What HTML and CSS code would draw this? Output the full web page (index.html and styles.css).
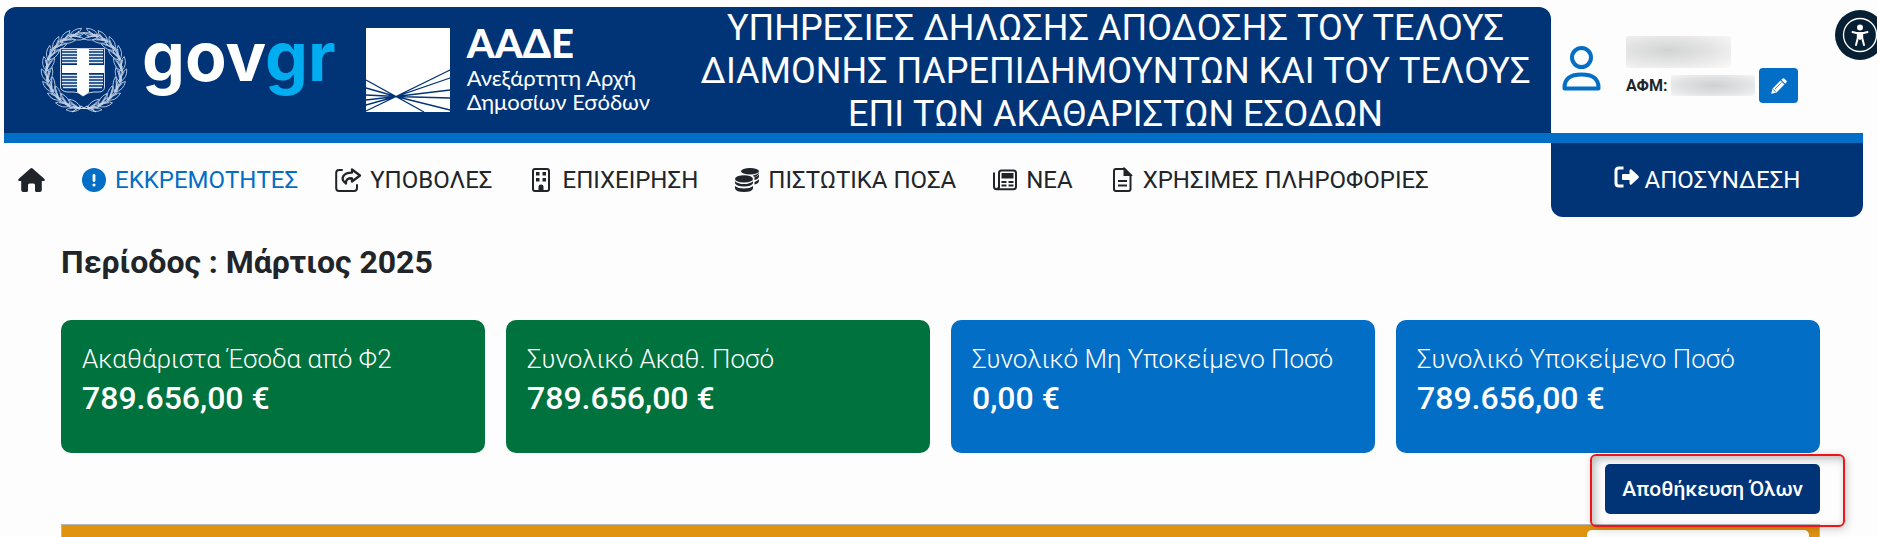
FILE: index.html
```html
<!DOCTYPE html>
<html lang="el">
<head>
<meta charset="utf-8">
<meta name="viewport" content="width=device-width, initial-scale=1">
<title>Τέλος Διαμονής Παρεπιδημούντων</title>
<link rel="stylesheet" href="styles.css">
</head>
<body>
<header class="top">
  <div class="banner">
    <svg class="emblem" viewBox="0 0 84 84" aria-hidden="true">
      <defs>
        <g id="leaf" fill="none" stroke="#c3d2e8" stroke-width="0.8">
          <path d="M5 48Q-2 43 0 34Q6 38 5 48ZM5 48Q4 40 11 34Q12 43 5 48ZM5 46Q2 39 5 32Q9 39 5 46M2 37L5 44M9 37L5 44M5 34V46"/>
        </g>
        <g id="branch">
          <use href="#leaf" transform="rotate(-76 42 42)"/>
          <use href="#leaf" transform="rotate(-59 42 42)"/>
          <use href="#leaf" transform="rotate(-42 42 42)"/>
          <use href="#leaf" transform="rotate(-25 42 42)"/>
          <use href="#leaf" transform="rotate(-8 42 42)"/>
          <use href="#leaf" transform="rotate(9 42 42)"/>
          <use href="#leaf" transform="rotate(26 42 42)"/>
          <use href="#leaf" transform="rotate(43 42 42)"/>
          <use href="#leaf" transform="rotate(60 42 42)"/>
          <use href="#leaf" transform="rotate(76 42 42)"/>
        </g>
      </defs>
      <use href="#branch"/>
      <use href="#branch" transform="matrix(-1 0 0 1 84 0)"/>
      <path d="M30 83L39 77L42 79L45 77L54 83M32 79L52 80" fill="none" stroke="#dfe8f5" stroke-width="1"/>
      <path d="M18.500 19.500H62.500V58Q62.500 62 58 63H52Q46 63 41 67Q37 63 32 63H25Q18.500 62 18.500 58Z" fill="none" stroke="#c3d2e8"/>
      <path d="M20 21.500H35M20 24.500H35M20 27.500H35M20 30.500H35M20 33.500H35M20 46.500H35M20 49.500H35M20 52.500H35M20 55.500H35M21 58.500H35M47 21.500H61M47 24.500H61M47 27.500H61M47 30.500H61M47 33.500H61M47 46.500H61M47 49.500H61M47 52.500H61M47 55.500H61M47 58.500H60" stroke="#dfe8f5" stroke-width="1.700"/>
      <path d="M35 20H47V36H62V44H47V63L41 67L35 63V44H20V36H35Z" fill="#fff"/>
    </svg>
    <span class="gov">gov<span class="gov-tail">gr</span></span>
    <div class="aade">
      <svg class="aade-mark" viewBox="0 0 84 84" aria-hidden="true">
        <path fill="#fff" d="M0 0H84V84H0Z"/>
        <path d="M0 52L30 68.500L84 42M0 60L30 68.500L84 50M0 67L30 68.500L84 62M0 72L30 68.500L84 70M0 77L30 68.500L84 82M0 83L30 68.500L58 84" fill="none" stroke="#003476" stroke-width="1.300"/>
      </svg>
      <div class="aade-text">
        <span class="aade-name">ΑΑΔΕ</span>
        <span class="aade-line">Ανεξάρτητη Αρχή</span>
        <span class="aade-line">Δημοσίων Εσόδων</span>
      </div>
    </div>
    <h1 class="service">ΥΠΗΡΕΣΙΕΣ ΔΗΛΩΣΗΣ ΑΠΟΔΟΣΗΣ ΤΟΥ ΤΕΛΟΥΣ ΔΙΑΜΟΝΗΣ ΠΑΡΕΠΙΔΗΜΟΥΝΤΩΝ ΚΑΙ ΤΟΥ ΤΕΛΟΥΣ ΕΠΙ ΤΩΝ ΑΚΑΘΑΡΙΣΤΩΝ ΕΣΟΔΩΝ</h1>
  </div>
  <div class="user">
    <svg class="user-icon" viewBox="0 0 39 45" aria-hidden="true" fill="none" stroke="#036ec6" stroke-width="4">
      <circle cx="19.500" cy="11.500" r="9.500"/>
      <path d="M2.500 42.500C2 32 9 28.500 19.500 28.500S37 32 36.500 42.500Z" stroke-linejoin="round"/>
    </svg>
    <div class="user-info">
      <div class="redacted redacted-name"></div>
      <div class="afm"><b>ΑΦΜ:</b><span class="redacted redacted-afm"></span>
        <button class="edit" type="button" aria-label="Επεξεργασία">
          <svg viewBox="0 0 16 16" width="16" height="16" aria-hidden="true"><path fill="#fff" d="M10.300 1.800L14.200 5.700L15.300 4.600Q16.300 3.500 15.300 2.400L13.600.700Q12.500-.300 11.400.700ZM9.500 2.600L1.600 10.500L.300 15.100Q.200 15.900.900 15.700L5.500 14.400L13.400 6.500Z"/><path d="M4 11L10.500 4.500M2 11.500L3.500 12.500L4.500 14" stroke="#036ec6" fill="none" stroke-width=".8"/></svg>
        </button>
      </div>
    </div>
  </div>
</header>
<div class="bar">
  <nav class="nav">
    <a href="#" aria-label="Αρχική"><svg class="home" viewBox="0 0 27 24" aria-hidden="true"><path fill="currentColor" d="M12.400.500Q13.500-.400 14.600.500L26.500 11Q27.500 12.500 26 13H23.800V22Q23.800 24 21.800 24H18.500Q17 24 17 22.500V17Q17 15.500 15.500 15.500H11.500Q10 15.500 10 17V22.500Q10 24 8.500 24H5.200Q3.200 24 3.200 22V13H1Q-.500 12.500.500 11Z"/></svg></a>
    <a class="active" href="#"><svg viewBox="0 0 24 24" aria-hidden="true"><circle cx="12" cy="12" r="12" fill="currentColor"/><path d="M12 7.500V12.500" stroke="#fff" stroke-width="2.800" stroke-linecap="round"/><circle cx="12" cy="17" r="1.600" fill="#fff"/></svg>ΕΚΚΡΕΜΟΤΗΤΕΣ</a>
    <a href="#"><svg class="share" viewBox="0 0 26 24" aria-hidden="true" fill="none" stroke="currentColor" stroke-width="2" stroke-linejoin="round" stroke-linecap="round"><path d="M7 2H4Q1.200 2 1.200 5V20Q1.200 23 4 23H19Q22 23 22 20V17"/><path stroke-width="2.300" d="M17 1.500L25 7.500L17 13.500V10.300C13 10 10.500 11.500 11 15.500C4.500 11 8 4.700 17 4.700Z"/></svg>ΥΠΟΒΟΛΕΣ</a>
    <a href="#"><svg viewBox="0 0 24 24" aria-hidden="true"><rect x="4" y="1" width="16" height="22" rx="2" fill="none" stroke="currentColor" stroke-width="2"/><path fill="currentColor" d="M7 4H10.500V7.500H7ZM13.500 4H17V7.500H13.500ZM7 10H10.500V13.500H7ZM13.500 10H17V13.500H13.500ZM9.500 23V18.500Q9.500 16.500 12 16.500T14.500 18.500V23Z"/></svg>ΕΠΙΧΕΙΡΗΣΗ</a>
    <a href="#"><svg viewBox="0 0 24 24" aria-hidden="true" fill="currentColor"><ellipse cx="15" cy="3.200" rx="9" ry="3.200"/><ellipse cx="9" cy="10.900" rx="9" ry="3.600"/><path d="M0 13.200Q3 16 9 16T18 13.200V15.300Q16 18.500 9 18.500T0 15.300ZM0 18Q3 20.500 9 20.500T18 18V20.500Q17 24 9 24T0 20.500ZM19.500 9.300Q22.500 8.500 24 6.500V8.500Q23.500 11 19.500 12ZM19.500 14Q22.500 13 24 11.300V13Q23.500 15.500 19.500 16.500ZM18 7.500Q22 7 24 4.700V5Q23 8 19 9Z"/></svg>ΠΙΣΤΩΤΙΚΑ ΠΟΣΑ</a>
    <a href="#"><svg viewBox="0 0 24 24" aria-hidden="true" fill="none" stroke="currentColor" stroke-width="2"><path d="M6 20V5Q6 2.500 8.500 2.500H20.500Q23 2.500 23 5V18.500Q23 21.300 20.500 21.300H3.500Q1 21.300 1 18.500V4.500M6 18Q6 21 3.500 21"/><path fill="currentColor" d="M9.500 6H19.500V9.500H9.500Z"/><path d="M8.500 14H13.500M15.500 14H20.500M8.500 17.500H13.500M15.500 17.500H20.500"/></svg>ΝΕΑ</a>
    <a href="#"><svg viewBox="0 0 24 24" aria-hidden="true" fill="none" stroke="currentColor" stroke-width="2"><path d="M14.500 1H6Q4 1 4 3V21Q4 23 6 23H18.500Q20.500 23 20.500 21V7L14.500 1Z"/><path d="M14.500 1V7H20.500Z" fill="currentColor"/><path d="M8 13H17M8 17.500H17" stroke-width="1.800"/></svg>ΧΡΗΣΙΜΕΣ ΠΛΗΡΟΦΟΡΙΕΣ</a>
  </nav>
  <button class="logout" type="button"><svg viewBox="0 0 25 22" aria-hidden="true"><path d="M9.500 2H5Q2 2 2 5V17Q2 20 5 20H9.500" fill="none" stroke="#fff" stroke-width="3" stroke-linecap="butt"/><path fill="#fff" d="M9 8Q8 8 8 9V13Q8 14 9 14H15.500V17.500Q16 19.500 17.500 18.500L24.500 12Q25.300 11 24.500 10L17.500 3.500Q16 2.500 15.500 4.500V8Z"/></svg>ΑΠΟΣΥΝΔΕΣΗ</button>
</div>
<main class="content">
  <h2 class="period">Περίοδος : Μάρτιος 2025</h2>
  <section class="cards">
    <article class="card green"><span class="label">Ακαθάριστα Έσοδα από Φ2</span><strong class="amount">789.656,00 €</strong></article>
    <article class="card green"><span class="label">Συνολικό Ακαθ. Ποσό</span><strong class="amount">789.656,00 €</strong></article>
    <article class="card blue"><span class="label">Συνολικό Μη Υποκείμενο Ποσό</span><strong class="amount">0,00 €</strong></article>
    <article class="card blue"><span class="label">Συνολικό Υποκείμενο Ποσό</span><strong class="amount">789.656,00 €</strong></article>
  </section>
  <div class="actions">
    <div class="save-wrap">
      <button class="save" type="button">Αποθήκευση Όλων</button>
      <span class="highlight"></span>
    </div>
  </div>
  <section class="panel"><div class="panel-box"></div></section>
</main>
<button class="access" type="button" aria-label="Προσβασιμότητα">
  <svg viewBox="0 0 50 50" aria-hidden="true"><circle cx="25" cy="25" r="16.500" fill="none" stroke="#fff" stroke-width="1.300"/><circle cx="25" cy="17.500" r="3" fill="#fff"/><path d="M17.500 22Q25 24.500 32.500 22M25 23V29M22.800 23V28L21 35M27.200 23V28L29 35" fill="none" stroke="#fff" stroke-width="2" stroke-linecap="round"/><path d="M22 22.500H28V29H22Z" fill="#fff"/></svg>
</button>
</body>
</html>
```
FILE: styles.css
```css
* { box-sizing: border-box; }
body {
  position: relative;
  margin: 0;
  padding: 7px 14px 0 4px;
  overflow-x: hidden;
  background: #fdfdfd;
  color: #212529;
  font-family: Roboto, "Noto Sans", sans-serif;
}
h1, h2 { margin: 0; }
button { font: inherit; border: 0; padding: 0; cursor: pointer; }
svg { display: block; flex: none; overflow: visible; }

.top, .bar { display: grid; grid-template-columns: minmax(0, 1fr) 312px; }
.top { grid-template-rows: 126px; border-bottom: 10px solid #036ec6; }
.banner {
  display: flex;
  align-items: center;
  padding: 2px 0 0 38px;
  background: #003476;
  border-radius: 12px 12px 0 0;
  color: #fff;
}
.emblem { width: 84px; height: 84px; }
.gov {
  margin-left: 16px;
  padding-bottom: 30px;
  font: 700 68px/80px Inter, sans-serif;
}
.gov-tail { color: #00adf0; }
.aade { display: flex; gap: 17px; margin-left: 30px; }
.aade-mark { width: 84px; height: 84px; }
.aade-text { display: flex; flex-direction: column; font-family: Lato, sans-serif; }
.aade-name { padding-bottom: 8px; font-size: 40px; font-weight: 900; line-height: 30px; white-space: nowrap; }
.aade-line { font-size: 22px; line-height: 24px; white-space: nowrap; }
.service {
  flex: 1;
  padding: 0 10px 0 40px;
  font-size: 36px;
  font-weight: 400;
  line-height: 43px;
  text-align: center;
}

.user { display: flex; align-items: flex-start; padding: 29px 0 0 11px; gap: 25px; }
.user-icon { width: 39px; height: 45px; margin-top: 10px; }
.redacted { display: block; border-radius: 2px; }
.redacted-name {
  width: 105px;
  height: 32px;
  background: radial-gradient(ellipse at 40% 45%, #d2d3d4, #e4e5e4 50%, #fafafa);
}
.redacted-afm {
  width: 84px;
  height: 21px;
  background: radial-gradient(ellipse at center, #cfd0d2, #e2e3e4 60%, #f6f6f6);
}
.afm { display: flex; align-items: center; gap: 4px; font-size: 16px; line-height: 35px; }
.edit { display: grid; place-items: center; width: 39px; height: 35px; border-radius: 4px; background: #036ec6; }

.nav { display: flex; align-items: center; gap: 37px; padding-left: 14px; font-size: 24px; }
.nav a { display: flex; align-items: center; gap: 9px; color: inherit; text-decoration: none; white-space: nowrap; }
.nav svg { width: 24px; height: 24px; }
.nav .home { width: 27px; }
.nav .share { width: 26px; }
.nav .active { color: #036ec6; }
.logout {
  display: flex;
  align-items: center;
  justify-content: center;
  gap: 6px;
  height: 74px;
  background: #003476;
  border-radius: 0 0 12px 12px;
  color: #fff;
  font-size: 24px;
}
.logout svg { width: 25px; height: 22px; margin-bottom: 6px; }

.content { padding: 24px 43px 0 57px; }
.period { font-size: 32px; font-weight: 700; line-height: 42px; }
.cards { display: grid; grid-template-columns: repeat(4, 1fr); gap: 21px; margin-top: 37px; }
.card {
  display: flex;
  flex-direction: column;
  height: 133px;
  padding: 20px 21px;
  border-radius: 10px;
  color: #fff;
}
.green { background: #00723e; }
.blue { background: #036ec6; }
.label { font-size: 26px; font-weight: 300; line-height: 38px; }
.amount { font-size: 32px; font-weight: 500; line-height: 40px; }
.actions { display: flex; justify-content: flex-end; padding: 11px 0 10px; }
.save-wrap { position: relative; }
.save {
  display: block;
  height: 50px;
  padding: 0 17px;
  border-radius: 5px;
  background: #003476;
  color: #fff;
  font-size: 21px;
  font-weight: 500;
}
.highlight {
  position: absolute;
  inset: -10px -25px -13px -15px;
  border: 2px solid #f01418;
  border-radius: 6px;
  box-shadow: 2px 2px 8px #0003, inset 3px 3px 8px #0004;
  pointer-events: none;
}
.panel {
  display: flex;
  justify-content: flex-end;
  padding: 5px 10px 0;
  border: 1px solid #b5b8ba;
  border-bottom: 0;
  background: #e0930f;
}
.panel-box { width: 222px; height: 7px; border-radius: 5px 5px 0 0; background: #fdfdfd; }
.access {
  position: absolute;
  top: 10px;
  right: -8px;
  width: 50px;
  height: 50px;
  border-radius: 50%;
  background: #061f33;
}
```
